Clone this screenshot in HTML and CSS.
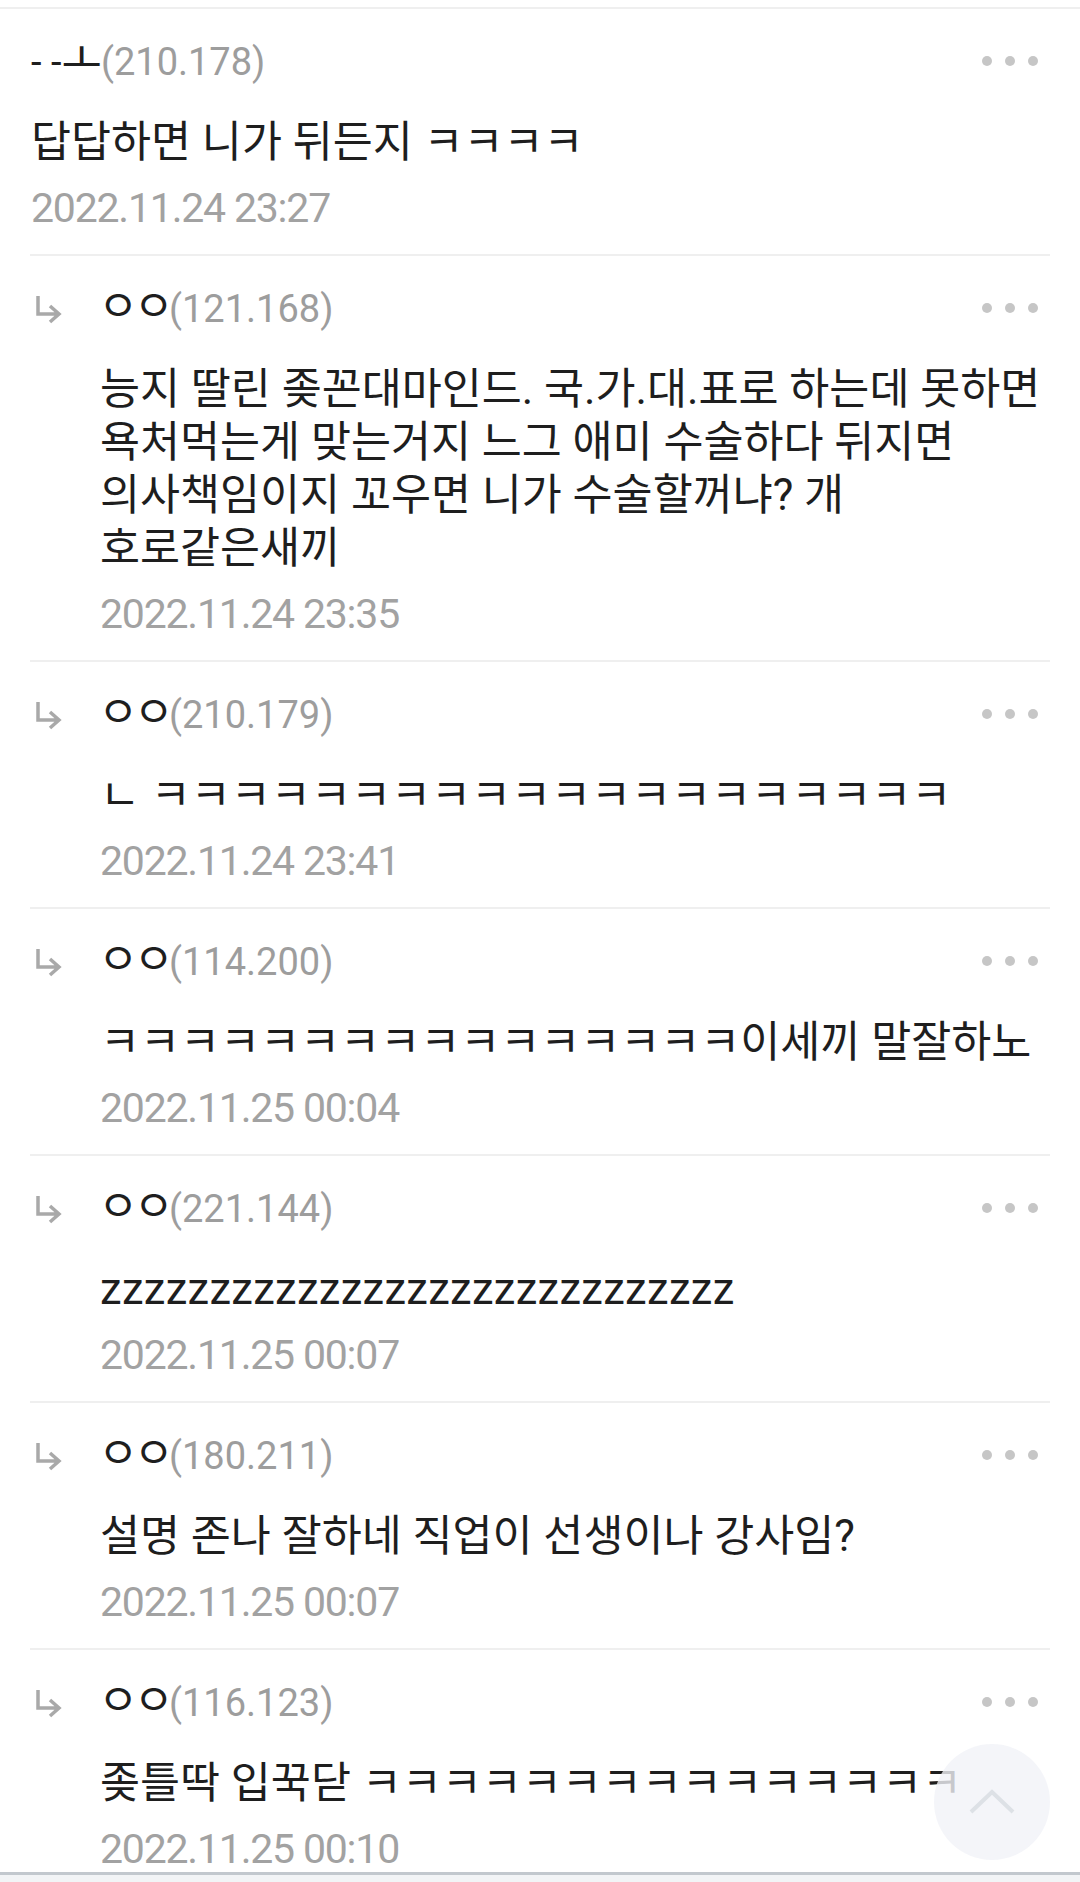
FILE: index.html
```html
<!DOCTYPE html>
<html lang="ko">
<head>
<meta charset="utf-8">
<title>댓글</title>
<link rel="stylesheet" href="styles.css">
</head>
<body>
<div class="page">
  <div class="list">
    <article class="comment">
      <div class="body top">
        <div class="head">
          <span class="who"><span class="nick">- -<span class="jamo solo">ㅗ</span></span><span class="ip">(210.178)</span></span>
          <span class="more"><i></i><i></i><i></i></span>
        </div>
        <p class="text">답답하면 니가 뒤든지 ㅋㅋㅋㅋ</p>
        <div class="date">2022.11.24 23:27</div>
      </div>
    </article>

    <article class="comment">
      <div class="gutter"><svg class="arrow" viewBox="0 0 28 32" width="28" height="32"><path d="M3 2V20H24M15 12L24 20L15 28"/></svg></div>
      <div class="body">
        <div class="head">
          <span class="who"><span class="nick jamo">ㅇㅇ</span><span class="ip">(121.168)</span></span>
          <span class="more"><i></i><i></i><i></i></span>
        </div>
        <p class="text">능지 딸린 좆꼰대마인드. 국.가.대.표로 하는데 못하면 욕처먹는게 맞는거지 느그 애미 수술하다 뒤지면 의사책임이지 꼬우면 니가 수술할꺼냐? 개 호로같은새끼</p>
        <div class="date">2022.11.24 23:35</div>
      </div>
    </article>

    <article class="comment">
      <div class="gutter"><svg class="arrow" viewBox="0 0 28 32" width="28" height="32"><path d="M3 2V20H24M15 12L24 20L15 28"/></svg></div>
      <div class="body">
        <div class="head">
          <span class="who"><span class="nick jamo">ㅇㅇ</span><span class="ip">(210.179)</span></span>
          <span class="more"><i></i><i></i><i></i></span>
        </div>
        <p class="text">ㄴ ㅋㅋㅋㅋㅋㅋㅋㅋㅋㅋㅋㅋㅋㅋㅋㅋㅋㅋㅋㅋ</p>
        <div class="date">2022.11.24 23:41</div>
      </div>
    </article>

    <article class="comment">
      <div class="gutter"><svg class="arrow" viewBox="0 0 28 32" width="28" height="32"><path d="M3 2V20H24M15 12L24 20L15 28"/></svg></div>
      <div class="body">
        <div class="head">
          <span class="who"><span class="nick jamo">ㅇㅇ</span><span class="ip">(114.200)</span></span>
          <span class="more"><i></i><i></i><i></i></span>
        </div>
        <p class="text">ㅋㅋㅋㅋㅋㅋㅋㅋㅋㅋㅋㅋㅋㅋㅋㅋ이세끼 말잘하노</p>
        <div class="date">2022.11.25 00:04</div>
      </div>
    </article>

    <article class="comment">
      <div class="gutter"><svg class="arrow" viewBox="0 0 28 32" width="28" height="32"><path d="M3 2V20H24M15 12L24 20L15 28"/></svg></div>
      <div class="body">
        <div class="head">
          <span class="who"><span class="nick jamo">ㅇㅇ</span><span class="ip">(221.144)</span></span>
          <span class="more"><i></i><i></i><i></i></span>
        </div>
        <p class="text latin">zzzzzzzzzzzzzzzzzzzzzzzzzzzzz</p>
        <div class="date">2022.11.25 00:07</div>
      </div>
    </article>

    <article class="comment">
      <div class="gutter"><svg class="arrow" viewBox="0 0 28 32" width="28" height="32"><path d="M3 2V20H24M15 12L24 20L15 28"/></svg></div>
      <div class="body">
        <div class="head">
          <span class="who"><span class="nick jamo">ㅇㅇ</span><span class="ip">(180.211)</span></span>
          <span class="more"><i></i><i></i><i></i></span>
        </div>
        <p class="text">설명 존나 잘하네 직업이 선생이나 강사임?</p>
        <div class="date">2022.11.25 00:07</div>
      </div>
    </article>

    <article class="comment last">
      <div class="gutter"><svg class="arrow" viewBox="0 0 28 32" width="28" height="32"><path d="M3 2V20H24M15 12L24 20L15 28"/></svg></div>
      <div class="body">
        <div class="head">
          <span class="who"><span class="nick jamo">ㅇㅇ</span><span class="ip">(116.123)</span></span>
          <span class="more"><i></i><i></i><i></i></span>
        </div>
        <p class="text">좆틀딱 입꾹닫 ㅋㅋㅋㅋㅋㅋㅋㅋㅋㅋㅋㅋㅋㅋㅋ</p>
        <div class="date">2022.11.25 00:10</div>
      </div>
    </article>
  </div>

  <button class="to-top" aria-label="맨 위로"><svg viewBox="0 0 48 28" width="48" height="28"><path d="M3 25L24 5L45 25"/></svg></button>
  <div class="navbar"></div>
</div>
</body>
</html>
```

FILE: styles.css
```css
* { box-sizing: border-box; }

html, body {
  margin: 0;
  padding: 0;
  background: #ffffff;
}

body {
  font-family: "Roboto", "Noto Sans CJK KR", sans-serif;
  color: #1e1e1e;
  width: 1080px;
  height: 1882px;
  overflow: hidden;
}

.page {
  position: relative;
  width: 1080px;
  height: 1882px;
  padding-top: 7px;
  display: flex;
  flex-direction: column;
}

.list {
  border-top: 2px solid #efefef;
  flex: 1;
  overflow: hidden;
}

.comment {
  display: flex;
  margin: 0 30px;
  border-bottom: 2px solid #efefef;
}

.comment.last {
  border-bottom: none;
}

.gutter {
  width: 70px;
  flex: none;
  padding-top: 38px;
  padding-left: 5px;
}

.arrow {
  display: block;
  fill: none;
  stroke: #a9a9a9;
  stroke-width: 3.5;
  stroke-linecap: butt;
  stroke-linejoin: miter;
}

.body {
  flex: 1;
  min-width: 0;
  padding: 27px 0 21px 0;
}

.body.top {
  padding-left: 1px;
}

.head {
  display: flex;
  align-items: center;
  height: 50px;
  white-space: nowrap;
}

.who {
  font-size: 38px;
  line-height: 50px;
}

.nick {
  color: #1e1e1e;
}

.jamo {
  font-size: 44px;
  letter-spacing: -5px;
}

.jamo.solo {
  letter-spacing: -1px;
}

.nick.jamo {
  margin-left: -2px;
}

.ip {
  color: #9d9d9d;
  letter-spacing: 0;
}

.more {
  margin-left: auto;
  margin-right: 12px;
  display: flex;
  gap: 13px;
}

.more i {
  display: block;
  width: 10px;
  height: 10px;
  border-radius: 50%;
  background: #c6c6c6;
}

.text {
  margin: 30px 0 0 0;
  font-size: 43.5px;
  line-height: 53px;
  color: #1e1e1e;
  word-break: keep-all;
  overflow-wrap: break-word;
}

.text.latin {
  letter-spacing: 0.3px;
}

.date {
  margin-top: 14px;
  height: 50px;
  line-height: 50px;
  font-size: 41px;
  letter-spacing: -1.2px;
  color: #a2a2a2;
}

.to-top {
  position: absolute;
  left: 934px;
  top: 1744px;
  width: 116px;
  height: 116px;
  border: none;
  padding: 0;
  border-radius: 50%;
  background: rgba(241, 243, 247, 0.8);
  display: flex;
  align-items: center;
  justify-content: center;
}

.to-top svg {
  display: block;
  fill: none;
  stroke: #dde1e6;
  stroke-width: 4;
  margin-top: -2px;
}

.navbar {
  flex: none;
  height: 10px;
  border-top: 3px solid #c2c8ce;
  background: #f2f4f6;
}
```
